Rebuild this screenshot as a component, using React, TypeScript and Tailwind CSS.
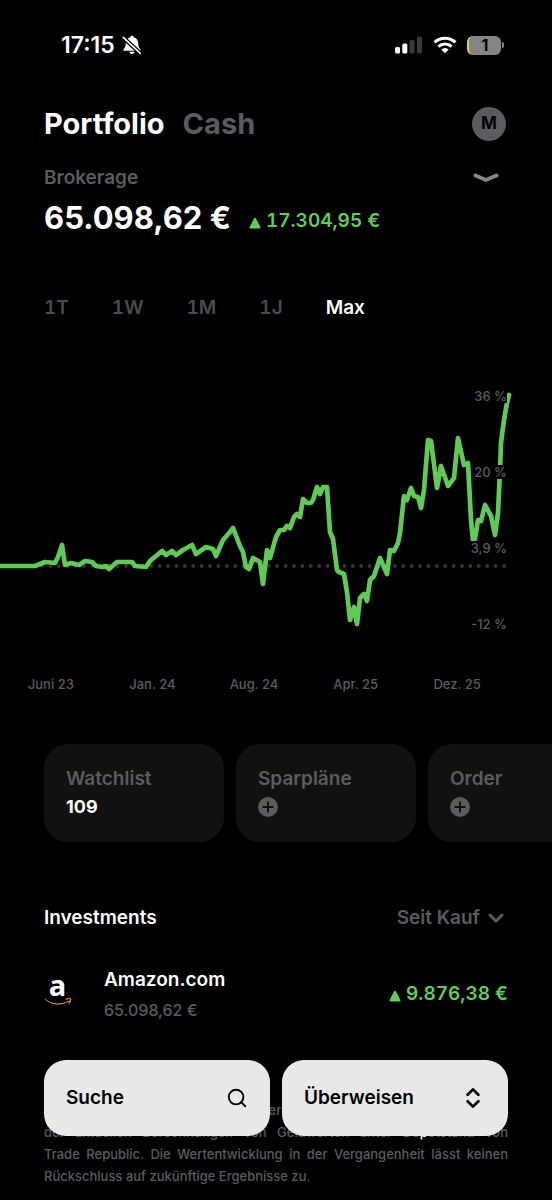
import { ChevronDown, ChevronsUpDown, Plus, Search } from 'lucide-react'

const RANGES = ['1T', '1W', '1M', '1J', 'Max']
const PERCENT_TICKS = ['36 %', '20 %', '3,9 %', '-12 %']
const DATE_TICKS = ['Juni 23', 'Jan. 24', 'Aug. 24', 'Apr. 25', 'Dez. 25']

const PERFORMANCE = [
  '0,196 35,196 45,192 55,193 58,187 62,175 65,195 71,193 79,195 85,191 92,192 96,196 102,197 106,196 109,199',
  '117,192 132,192 135,196 146,197 150,191 162,181 166,185 172,181 176,185 183,180 192,175 196,184 206,177 213,179',
  '216,186 223,170 230,162 233,158 240,176 243,182 246,197 249,199 253,188 260,192 263,214 267,180 270,188 276,167',
  '280,160 284,160 287,156 290,158 294,147 297,144 300,147 303,129 307,133 311,133 313,130 317,117 320,124 323,117',
  '327,117 330,162 333,169 337,200 339,202 344,204 347,222 350,250 354,237 357,254 360,228 364,224 367,231 370,210',
  '374,206 380,188 387,204 390,180 394,181 398,173 400,163 404,126 407,130 411,118 414,126 418,127 421,138 424,120',
  '428,70 431,71 437,118 441,96 448,116 454,108 458,68 464,95 468,93 471,150 473,171 475,169 478,150 481,151 485,135',
  '491,146 495,165 498,143 500,100 501,73 504,50 507,33 509,25',
].join(' ')

function StatusBar() {
  return (
    <div className="flex h-9 items-end justify-between pl-[61px] pr-12">
      <div className="flex items-center gap-[7px]">
        <span className="text-[23px] font-semibold leading-7 text-white">17:15</span>
        <svg viewBox="0 0 20 20" className="size-5" fill="none">
          <path
            d="M10 .8c.9 0 1.600.6 1.700 1.400 2.700.7 4.300 2.900 4.500 5.800.1 3.300.9 4.700 2 5.900.8.900.5 1.800-.6 1.800H2.400c-1.100 0-1.400-.9-.6-1.800 1.100-1.200 1.900-2.600 2-5.900.2-2.900 1.800-5.100 4.500-5.800C8.400 1.400 9.100.8 10 .8Z"
            fill="#fff"
          />
          <path d="M7.300 16.800h5.400c-.3 1.300-1.300 2.100-2.700 2.100s-2.400-.8-2.700-2.100Z" fill="#fff" />
          <path d="m1 2.300 17.500 16.200" stroke="#000" strokeWidth="4.200" />
          <path d="m1.300 2.300 17 16" stroke="#fff" strokeWidth="1.600" strokeLinecap="round" />
        </svg>
      </div>
      <div className="flex h-7 items-center gap-[10px]">
        <svg viewBox="0 0 28 18" className="h-[18px] w-7">
          <rect x="0" y="11" width="5" height="6.500" rx="1.500" fill="#fff" />
          <rect x="7.300" y="7.500" width="5" height="10" rx="1.500" fill="#fff" />
          <rect x="14.600" y="4" width="5" height="13.500" rx="1.500" fill="#3a3a3a" />
          <rect x="22" y="0.500" width="5" height="17" rx="1.500" fill="#3a3a3a" />
        </svg>
        <svg viewBox="0 0 24 18" className="h-[18px] w-6" fill="none" stroke="#fff" strokeWidth="3">
          <path d="M1.500 6.400a15.200 15.200 0 0 1 21 0" />
          <path d="M5.400 10.600a9.500 9.500 0 0 1 13.200 0" />
          <path d="M12 17.300 8.300 13.600a5.300 5.300 0 0 1 7.400 0Z" fill="#fff" stroke="none" />
        </svg>
        <div className="flex items-center gap-px">
          <div className="flex h-[19px] w-[34px] items-center justify-center overflow-hidden rounded-md border-l-2 border-[#e5cf4e] bg-[#858585] text-base font-bold leading-none text-black">
            1
          </div>
          <div className="h-[6px] w-[2px] rounded-r-full bg-[#858585]" />
        </div>
      </div>
    </div>
  )
}

function Gain({ amount }: { amount: string }) {
  return (
    <span className="flex items-center gap-[5px] text-[19px] font-semibold tabular-nums text-[#62cc56]">
      <svg viewBox="0 0 12 12" className="mt-1 size-3" fill="currentColor">
        <path d="M5.100 1.300a1 1 0 0 1 1.800 0l4.500 8.700a1 1 0 0 1-.9 1.500h-9A1 1 0 0 1 .6 10Z" />
      </svg>
      {amount}
    </span>
  )
}

function Chart() {
  return (
    <section className="mt-12">
      <div className="relative">
        <svg viewBox="0 0 552 270" className="block w-full" fill="none">
          <path d="M504 196H0" stroke="#333" strokeWidth="4" strokeLinecap="round" strokeDasharray="0 8.400" />
          <polyline
            points={PERFORMANCE}
            stroke="#5fcb55"
            strokeWidth="4.700"
            strokeLinecap="round"
            strokeLinejoin="round"
          />
        </svg>
        <div className="absolute inset-y-0 right-[45px] flex flex-col items-end justify-between pb-[9px] pt-[19px] text-[13px] font-medium leading-[14px] text-[#5b5b60]">
          {PERCENT_TICKS.map((tick) => (
            <span key={tick} className="bg-black">
              {tick}
            </span>
          ))}
        </div>
      </div>
      <div className="mt-[34px] grid grid-cols-5 pr-11 text-center text-[13px] font-medium leading-5 text-[#5b5b60]">
        {DATE_TICKS.map((tick) => (
          <span key={tick}>{tick}</span>
        ))}
      </div>
    </section>
  )
}

function Card({ title, value }: { title: string; value?: string }) {
  return (
    <button className="flex h-[98px] w-[180px] shrink-0 flex-col items-start justify-center rounded-[24px] bg-[#111] px-[22px] text-left">
      <span className="text-[19px] font-semibold leading-7 text-[#5b5b60]">{title}</span>
      <span className="flex h-7 items-center text-lg font-bold text-white">
        {value ?? (
          <span className="flex size-5 items-center justify-center rounded-full bg-[#5b5b60]">
            <Plus className="size-4 text-[#111]" strokeWidth={3} />
          </span>
        )}
      </span>
    </button>
  )
}

export default function App() {
  return (
    <div className="min-h-screen overflow-hidden bg-black pt-[23px] font-['Inter',sans-serif]">
      <StatusBar />

      <header className="mt-[47px] flex items-center justify-between pl-11 pr-[46px]">
        <nav className="flex gap-[18px] text-[29px] font-bold leading-9">
          <button className="text-white">Portfolio</button>
          <button className="text-[#5b5b60]">Cash</button>
        </nav>
        <button className="flex size-[34px] items-center justify-center rounded-full bg-[#5b5b60] text-[17px] font-bold text-black">
          M
        </button>
      </header>

      <section className="mt-[22px] px-11">
        <div className="flex items-center justify-between pr-[9px]">
          <h2 className="text-[19px] font-semibold leading-7 text-[#5b5b60]">Brokerage</h2>
          <button aria-label="Details">
            <svg viewBox="0 0 26 10" className="h-[10px] w-[26px]" fill="none">
              <path d="m2.500 2.500 10.500 4.500 10.500-4.500" stroke="#858588" strokeWidth="4" strokeLinecap="round" strokeLinejoin="round" />
            </svg>
          </button>
        </div>
        <div className="mt-[6px] flex items-baseline gap-[18px]">
          <span className="text-[31px] font-bold leading-10 text-white">65.098,62 €</span>
          <Gain amount="17.304,95 €" />
        </div>
      </section>

      <div className="mt-14 flex gap-[43px] px-11 text-[19px] font-semibold tabular-nums leading-7">
        {RANGES.map((range) => (
          <button key={range} className={range === 'Max' ? 'text-white' : 'text-[#4b4b50]'}>
            {range}
          </button>
        ))}
      </div>

      <Chart />

      <div className="mt-[50px] flex gap-3 overflow-hidden pl-11">
        <Card title="Watchlist" value="109" />
        <Card title="Sparpläne" />
        <Card title="Order" />
      </div>

      <section className="mt-[62px] px-11">
        <div className="flex items-center justify-between text-[19px] font-semibold leading-7">
          <h2 className="text-white">Investments</h2>
          <button className="flex items-center gap-1 text-[#5b5b60]">
            Seit Kauf
            <ChevronDown className="size-6" strokeWidth={3} />
          </button>
        </div>
        <div className="mt-8 flex items-center">
          <svg viewBox="0 -9 28 60" className="h-[60px] w-7 shrink-0">
            <text x="13.500" y="23" textAnchor="middle" fill="#fff" fontSize="29" fontWeight="700" fontFamily="'Open Sans', sans-serif">
              a
            </text>
            <path d="M.8 25.500C8 31.400 17 31.800 24.300 27.800c.7-.3 1.100.3.5.8C17.500 33.300 7.500 32.600.5 26c-.4-.4 0-.8.3-.5Z" fill="#e39a3c" />
            <path d="M22.200 26.300c1.500-.9 3.700-.9 4.200-.4.400.6-.1 2.800-1.500 4.100" stroke="#e39a3c" strokeWidth="1.300" fill="none" strokeLinecap="round" />
          </svg>
          <div className="ml-8 flex-1">
            <h3 className="text-[19px] font-semibold leading-8 text-white">Amazon.com</h3>
            <p className="text-base font-medium leading-7 text-[#5b5b60]">65.098,62 €</p>
          </div>
          <Gain amount="9.876,38 €" />
        </div>
        <p className="mt-[75px] text-justify text-[13px] font-medium leading-[22px] text-[#5b5b60]">
          <span className="block [text-align-last:justify]">Dieser Wert dient nur als Marker der Bewertung und beruht auf</span>
          <span className="block [text-align-last:justify]">
            der aktuellen Berechnungen von Geldwerten unter De<span className="text-white">p</span>otstand von
          </span>
          <span className="block [text-align-last:justify]">Trade Republic. Die Wertentwicklung in der Vergangenheit lässt keinen</span>
          <span className="block">Rückschluss auf zukünftige Ergebnisse zu.</span>
        </p>
      </section>

      <div className="fixed inset-x-11 bottom-16 grid grid-cols-2 gap-3 text-[19px] font-semibold text-black">
        <button className="flex h-[76px] items-center justify-between rounded-[22px] bg-[#e8e8e8] px-[22px]">
          Suche
          <Search className="size-[22px]" />
        </button>
        <button className="flex h-[76px] items-center justify-between rounded-[22px] bg-[#e8e8e8] px-[22px]">
          Überweisen
          <ChevronsUpDown className="size-[26px]" strokeWidth={2.5} />
        </button>
      </div>
    </div>
  )
}
